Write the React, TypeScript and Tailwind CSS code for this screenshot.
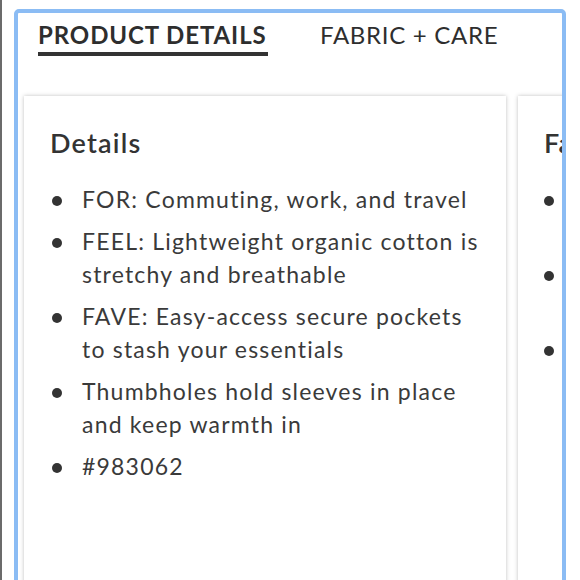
const items = [
  ['FOR: Commuting, work, and travel'],
  ['FEEL: Lightweight organic cotton is', 'stretchy and breathable'],
  ['FAVE: Easy-access secure pockets', 'to stash your essentials'],
  ['Thumbholes hold sleeves in place', 'and keep warmth in'],
  ['#983062'],
];

const App = () => {
  return (
    <div
      className="relative h-[580px] w-[580px] overflow-hidden bg-white text-[#333]"
      style={{ fontFamily: 'Lato, "Open Sans", sans-serif' }}
    >
      <div className="absolute left-0 top-0 h-full w-[2px] bg-[#6b6b6b]" />
      <div className="ml-[14px] mt-[9px] h-[620px] w-[552px] overflow-hidden rounded-[5px] border-[4px] border-[#8bbcf4] bg-white">
        <div className="flex items-start pl-[20px] pt-[6px]">
          <div className="flex flex-col">
            <span className="text-[24px] font-bold leading-[32px] tracking-[0.9px] text-[#2e2e2e]">PRODUCT DETAILS</span>
            <div className="mt-[1px] h-[4px] w-[230px] bg-[#333]" />
          </div>
          <span className="ml-[52px] text-[24px] leading-[32px] tracking-[0.7px] text-[#2e2e2e]">FABRIC + CARE</span>
        </div>
        <div className="mt-[40px] flex gap-[12px] pl-[6px]">
          <div className="h-[520px] w-[482px] shrink-0 bg-white px-[26px] pt-[30px] shadow-[0_0_4px_rgba(0,0,0,0.25)]">
            <h2 className="text-[27px] font-semibold leading-[34px] tracking-[1.2px] text-[#333]">Details</h2>
            <ul className="mt-[23px] flex flex-col gap-[9px]">
              {items.map((lines, i) => (
                <li key={i} className="flex text-[23px] leading-[33px] tracking-[1.2px] text-[#3a3a3a]">
                  <span className="flex w-[32px] shrink-0 items-start pt-[13px] pl-[2px]">
                    <span className="block h-[10px] w-[10px] rounded-full bg-[#333]" />
                  </span>
                  <span>
                    {lines.map((l, j) => (
                      <span key={j} className="block whitespace-nowrap">{l}</span>
                    ))}
                  </span>
                </li>
              ))}
            </ul>
          </div>
          <div className="h-[520px] w-[200px] shrink-0 bg-white px-[26px] pt-[30px] shadow-[0_0_4px_rgba(0,0,0,0.25)]">
            <h2 className="text-[27px] font-semibold leading-[34px] tracking-[1.2px] text-[#333]">Fabric</h2>
            <ul className="mt-[23px] flex flex-col">
              {[0, 1, 2].map((i) => (
                <li key={i} className="flex h-[75px] pt-[13px]">
                  <span className="block h-[10px] w-[10px] rounded-full bg-[#333]" />
                </li>
              ))}
            </ul>
          </div>
        </div>
      </div>
    </div>
  );
};

export default App;
